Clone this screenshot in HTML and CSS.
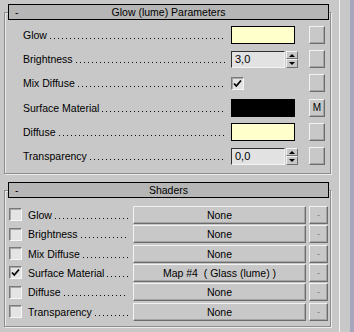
FILE: index.html
```html
<!DOCTYPE html>
<html lang="en">
<head>
    <meta charset="UTF-8">
    <title>Glow (lume) Parameters</title>
    <link rel="stylesheet" href="styles.css">
</head>
<body>

<div class="window">
    <div class="main">

        <div class="rollout rollout-params">
            <div class="rollout-head"><span class="toggle">-</span><span class="title">Glow (lume) Parameters</span><span></span></div>

            <div class="param-row">
                <span class="lbl"><span>Glow</span><i class="dots"></i></span>
                <div class="ctl"><span class="swatch swatch-light"></span></div>
                <span class="btn map-btn"></span>
            </div>
            <div class="param-row">
                <span class="lbl"><span>Brightness</span><i class="dots"></i></span>
                <div class="ctl spinner">
                    <span class="spin-edit">3,0</span>
                    <span class="spin-arrows"><i class="up"></i><i class="down"></i></span>
                </div>
                <span class="btn map-btn"></span>
            </div>
            <div class="param-row">
                <span class="lbl"><span>Mix Diffuse</span><i class="dots"></i></span>
                <div class="ctl"><span class="check checked"><svg width="9" height="9" viewBox="0 0 9 9"><path d="M1 4.5 L3.3 7 L8 1.5" fill="none" stroke="#000" stroke-width="1.8"/></svg></span></div>
                <span class="btn map-btn"></span>
            </div>
            <div class="param-row">
                <span class="lbl"><span>Surface Material</span><i class="dots"></i></span>
                <div class="ctl"><span class="swatch swatch-dark"></span></div>
                <span class="btn map-btn">M</span>
            </div>
            <div class="param-row">
                <span class="lbl"><span>Diffuse</span><i class="dots"></i></span>
                <div class="ctl"><span class="swatch swatch-light"></span></div>
                <span class="btn map-btn"></span>
            </div>
            <div class="param-row">
                <span class="lbl"><span>Transparency</span><i class="dots"></i></span>
                <div class="ctl spinner">
                    <span class="spin-edit">0,0</span>
                    <span class="spin-arrows"><i class="up"></i><i class="down"></i></span>
                </div>
                <span class="btn map-btn"></span>
            </div>
        </div>

        <div class="rollout rollout-shaders">
            <div class="rollout-head"><span class="toggle">-</span><span class="title">Shaders</span><span></span></div>

            <div class="shader-row">
                <span class="check"></span>
                <span class="lbl"><span>Glow</span><i class="dots"></i></span>
                <span class="btn slot">None</span>
                <span class="btn clear">-</span>
            </div>
            <div class="shader-row">
                <span class="check"></span>
                <span class="lbl"><span>Brightness</span><i class="dots"></i></span>
                <span class="btn slot">None</span>
                <span class="btn clear">-</span>
            </div>
            <div class="shader-row">
                <span class="check"></span>
                <span class="lbl"><span>Mix Diffuse</span><i class="dots"></i></span>
                <span class="btn slot">None</span>
                <span class="btn clear">-</span>
            </div>
            <div class="shader-row">
                <span class="check checked"><svg width="9" height="9" viewBox="0 0 9 9"><path d="M1 4.5 L3.3 7 L8 1.5" fill="none" stroke="#000" stroke-width="1.8"/></svg></span>
                <span class="lbl"><span>Surface Material</span><i class="dots"></i></span>
                <span class="btn slot">Map #4&nbsp;&nbsp;( Glass (lume) )</span>
                <span class="btn clear">-</span>
            </div>
            <div class="shader-row">
                <span class="check"></span>
                <span class="lbl"><span>Diffuse</span><i class="dots"></i></span>
                <span class="btn slot">None</span>
                <span class="btn clear">-</span>
            </div>
            <div class="shader-row">
                <span class="check"></span>
                <span class="lbl"><span>Transparency</span><i class="dots"></i></span>
                <span class="btn slot">None</span>
                <span class="btn clear">-</span>
            </div>
        </div>

    </div>
    <div class="gutter"></div>
    <div class="edge"></div>
</div>

</body>
</html>
```

FILE: styles.css
```css
body { margin: 0; background: #c8c8c8; color: #000; font: 10.5px "Liberation Sans", Arial, sans-serif; }

.window { display: flex; width: 354px; height: 332px; overflow: hidden; }
.main { width: 339px; }
.gutter { width: 10px; border-left: 1px solid #f2f2f2; }
.edge { width: 4px; background: #a6a6bc; }

/* rollout frame + header */
.rollout { box-sizing: border-box; width: 327px; margin-left: 4px; border: 1px solid #8c8c8c; box-shadow: inset 1px 1px 0 #ececec, 1px 1px 0 #ececec; }
.rollout-params { margin-top: 12px; padding-bottom: 5px; }
.rollout-shaders { margin-top: 16px; padding-bottom: 5px; }

.rollout-head { position: relative; display: grid; grid-template-columns: 1fr auto 1fr; align-items: center; box-sizing: border-box; height: 16px; margin: -9px 1px 0 3px; padding: 0 6px; background: #b6b6b6; border: 1px solid #000; }
.rollout-params .rollout-head { margin-bottom: 3px; }
.rollout-shaders .rollout-head { margin-bottom: 7px; }

/* label with leader dots */
.lbl { display: flex; align-items: baseline; padding-right: 5px; white-space: nowrap; }
.dots { flex: 1; height: 1px; margin-left: 3px; background-image: linear-gradient(to right, #111 0 1px, transparent 1px 4px); background-size: 4px 1px; background-repeat: repeat-x; }

/* parameter rows */
.param-row { display: grid; grid-template-columns: 208px 78px 16px; align-items: center; height: 24.2px; padding-left: 18px; }
.ctl { display: flex; align-items: center; }

.swatch { box-sizing: border-box; width: 64px; height: 18px; border: 1px solid #000; }
.swatch-light { background: #ffffcc; }
.swatch-dark { background: #000; }

.spinner { height: 17px; }
.spin-edit { box-sizing: border-box; width: 54px; height: 17px; padding: 1px 0 0 3px; background: #e2e2e2; border: 1px solid; border-color: #303030 #f4f4f4 #f4f4f4 #303030; font-size: 11px; }
.spin-arrows { display: flex; flex-direction: column; width: 12px; height: 17px; margin-left: 1px; }
.spin-arrows i { flex: 1; position: relative; box-sizing: border-box; border: 1px solid; border-color: #f4f4f4 #707070 #707070 #f4f4f4; }
.spin-arrows i::after { content: ""; position: absolute; left: 2px; border-left: 3px solid transparent; border-right: 3px solid transparent; }
.spin-arrows .up::after { top: 2px; border-bottom: 3px solid #000; }
.spin-arrows .down::after { top: 2px; border-top: 3px solid #000; }

.check { display: flex; align-items: center; justify-content: center; box-sizing: border-box; width: 13px; height: 13px; background: #e4e4e4; border: 1px solid; border-color: #7a7a7a #f6f6f6 #f6f6f6 #7a7a7a; box-shadow: inset 1px 1px 0 #a8a8a8; }

.btn { display: flex; align-items: center; justify-content: center; box-sizing: border-box; background: #c8c8c8; border: 1px solid; border-color: #f2f2f2 #6c6c6c #6c6c6c #f2f2f2; box-shadow: inset -1px -1px 0 #a4a4a4; white-space: nowrap; }
.map-btn { width: 16px; height: 18px; font-size: 10px; }

/* shader rows */
.shader-row { display: grid; grid-template-columns: 19px 105px 173px 22px; align-items: center; height: 19.4px; padding-left: 4px; }
.slot { height: 18px; }
.clear { width: 19px; height: 18px; margin-left: 3px; color: #7a7a7a; font-size: 9px; }
```
